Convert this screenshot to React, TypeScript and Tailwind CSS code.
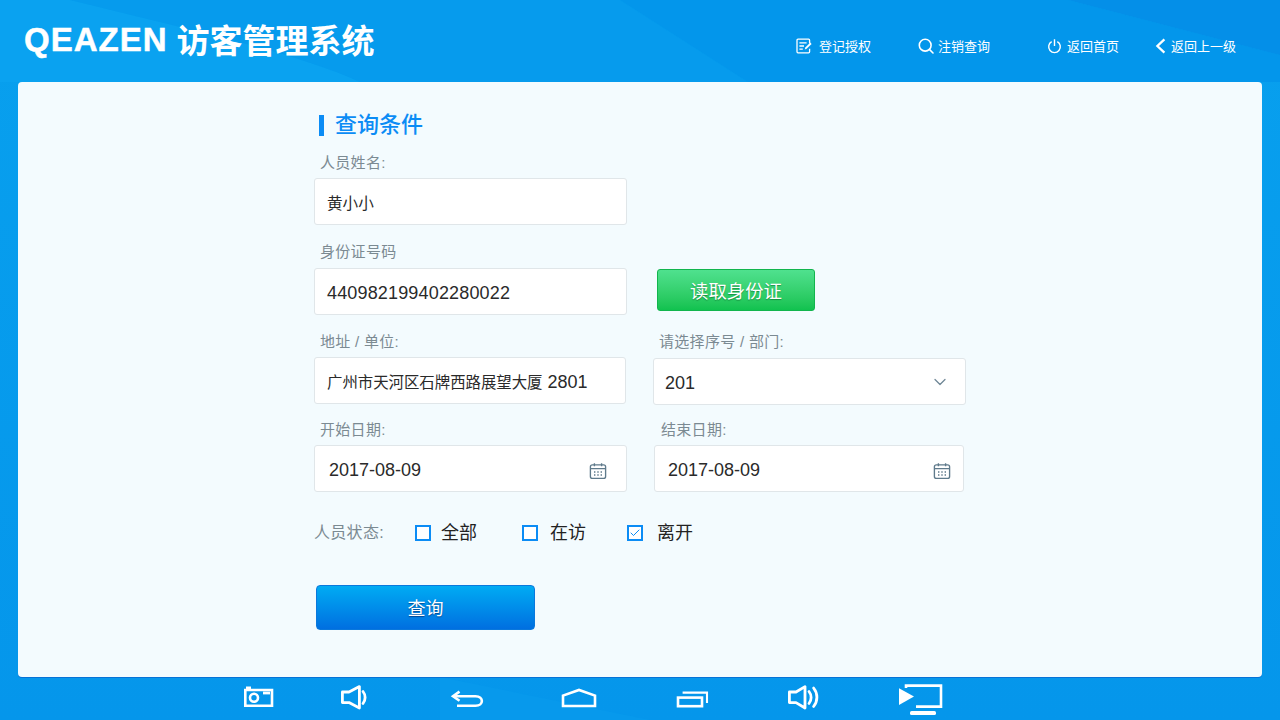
import React from 'react';
import { ChevronDown, Check } from 'lucide-react';

const CalendarIcon = () => (
    <svg viewBox="0 0 18 18" className="w-[18px] h-[18px] text-[#5f7a8b]" fill="none" stroke="currentColor" strokeWidth="1.35">
        <rect x="1.4" y="2.8" width="15.2" height="13.6" rx="2" />
        <path d="M1.4 6.6h15.2M5.4 1.2v3M12.6 1.2v3" />
        <path d="M5 10h1.4M8.3 10h1.4M11.6 10h1.4M5 13h1.4M8.3 13h1.4M11.6 13h1.4" strokeWidth="1.4" />
    </svg>
);

const RegisterIcon = () => (
    <svg viewBox="0 0 16 16" className="w-[16px] h-[16px]" fill="none" stroke="white" strokeWidth="1.3">
        <path d="M13.6 5.5V2.2a1 1 0 0 0-1-1H2a1 1 0 0 0-1 1v11.6a1 1 0 0 0 1 1h10.6a1 1 0 0 0 1-1v-3" />
        <path d="M3.4 4.8h7.2M3.4 8h4.6M3.4 11.2h3.4" />
        <path d="M8.8 11.4l.5-2 5-4.8 1.3 1.3-5 4.9z" fill="white" stroke="none" />
    </svg>
);

const Label = ({ text, className = '' }: { text: string; className?: string }) => (
    <div className={`h-5 leading-5 text-[15px] tracking-[0.3px] text-[#7b8a92] ${className}`}>{text}</div>
);

const Field = ({ width, className = '', children }: { width: string; className?: string; children: React.ReactNode }) => (
    <div className={`${width} h-[47px] pt-[4px] bg-white border border-[#e0e6e9] rounded-[3px] flex items-center text-[18px] text-[#2a2a2a] ${className}`}>
        {children}
    </div>
);

const StatusOption = ({ text, checked, className }: { text: string; checked?: boolean; className: string }) => (
    <div className={`flex items-center ${className}`}>
        <span className="w-4 h-4 border-2 border-[#0b8cf5] bg-white flex items-center justify-center">
            {checked && <Check className="w-3 h-3 text-[#0b8cf5]" strokeWidth={2} />}
        </span>
        <span className="text-[18px] text-[#222]">{text}</span>
    </div>
);

const App: React.FC = () => {
    return (
        <div className="relative w-[1280px] h-[720px] overflow-hidden bg-gradient-to-b from-[#08a0ee] to-[#0596eb] flex flex-col font-['Liberation_Sans','Noto_Sans_CJK_SC',sans-serif]">
            {/* background swooshes */}
            <svg className="absolute inset-0 w-[1280px] h-[720px]" viewBox="0 0 1280 720">
                <path d="M0 0H70C170 25 290 50 360 82H0Z" fill="#0aa2f0" />
                <path d="M70 0H620L748 82H360C290 50 170 25 70 0Z" fill="#069bed" />
                <path d="M620 0H1068L1280 55V82H748Z" fill="#0396eb" />
                <path d="M1068 0H1280V55Z" fill="#048fe8" />
                <path d="M440 677L650 720H440Z" fill="#0799ec" />
            </svg>

            <header className="relative h-[82px] shrink-0 flex items-start pl-6 pr-11">
                <div className="mt-[16px] flex items-center h-[48px] text-white font-bold text-[33px] font-['Liberation_Sans','Noto_Sans_CJK_SC',sans-serif]">
                    <span className="tracking-[1px] [-webkit-text-stroke:0.5px_white]">QEAZEN</span>
                    <span className="ml-[9px] font-['Noto_Sans_CJK_SC',sans-serif]">访客管理系统</span>
                </div>
                <nav className="ml-auto mt-[36px] h-5 flex items-center text-white text-[13px] font-['Noto_Sans_CJK_SC',sans-serif]">
                    <div className="flex items-center gap-[7px]">
                        <RegisterIcon />
                        <span>登记授权</span>
                    </div>
                    <div className="flex items-center gap-[4px] ml-[47px]">
                        <svg viewBox="0 0 16 16" className="w-4 h-4" fill="none" stroke="white" strokeWidth="1.6">
                            <circle cx="7.2" cy="7.2" r="5.9" />
                            <path d="M11.4 11.4L15 15" strokeLinecap="round" />
                        </svg>
                        <span>注销查询</span>
                    </div>
                    <div className="flex items-center gap-[5px] ml-[57px]">
                        <svg viewBox="0 0 16 16" className="w-[15px] h-4" fill="none" stroke="white" strokeWidth="1.5">
                            <path d="M5 3.4A6.2 6.2 0 1 0 11 3.4" />
                            <path d="M8 .8V8" />
                        </svg>
                        <span>返回首页</span>
                    </div>
                    <div className="flex items-center gap-[5px] ml-[36px]">
                        <svg viewBox="0 0 11 16" className="w-[11px] h-4" fill="none" stroke="white" strokeWidth="2.3">
                            <path d="M9.4 1.4L2.4 8L9.4 14.6" />
                        </svg>
                        <span>返回上一级</span>
                    </div>
                </nav>
            </header>

            <main className="relative mx-[18px] h-[595px] shrink-0 bg-[#f3fbfe] rounded-[4px] shadow-[0_1px_0_#0672d6] pl-[296px] pt-[31px]">
                <div className="flex items-center h-[24px] pl-[5px]">
                    <span className="w-[5px] h-[21px] bg-[#0b8cf5]" />
                    <span className="ml-[11px] -mt-[5px] text-[22px] font-medium text-[#0b8cf5] font-['Noto_Sans_CJK_SC',sans-serif]">查询条件</span>
                </div>

                <Label text="人员姓名:" className="pl-[6px] mt-[16px] mb-[5px]" />
                <Field width="w-[313px]" className="pl-[12px]">
                    <span className="text-[15.6px]">黄小小</span>
                </Field>

                <Label text="身份证号码" className="pl-[6px] mt-[17px] mb-[6px]" />
                <div className="flex items-center">
                    <Field width="w-[313px]" className="pl-[12px] tracking-[0.16px]">440982199402280022</Field>
                    <button className="ml-[30px] mb-[4px] w-[158px] h-[42px] pt-[2px] rounded-[3px] border border-[#12b54d] bg-gradient-to-b from-[#4fe18e] to-[#10c24f] text-white text-[18.4px] font-['Noto_Sans_CJK_SC',sans-serif] [text-shadow:0_1px_1px_rgba(0,80,30,0.5)]">
                        读取身份证
                    </button>
                </div>

                <div className="flex mt-[17px]">
                    <div>
                        <Label text="地址 / 单位:" className="pl-[6px] mb-[5px]" />
                        <Field width="w-[312px]" className="pl-[12px]">
                            <span className="text-[15.4px]">广州市天河区石牌西路展望大厦</span>
                            <span className="ml-[5px]">2801</span>
                        </Field>
                    </div>
                    <div className="ml-[27px]">
                        <Label text="请选择序号 / 部门:" className="pl-[6px] mb-[6px]" />
                        <Field width="w-[313px]" className="pl-[11px] pr-[15px] justify-between">
                            <span>201</span>
                            <ChevronDown className="w-5 h-5 -mt-[4px] text-[#6f8796]" strokeWidth={1.5} />
                        </Field>
                    </div>
                </div>

                <div className="flex mt-[15px]">
                    <div>
                        <Label text="开始日期:" className="pl-[6px] mb-[5px]" />
                        <Field width="w-[313px]" className="pl-[14px] pr-[19px] justify-between">
                            <span>2017-08-09</span>
                            <CalendarIcon />
                        </Field>
                    </div>
                    <div className="ml-[27px]">
                        <Label text="结束日期:" className="pl-[7px] mb-[5px]" />
                        <Field width="w-[310px]" className="pl-[13px] pr-[12px] justify-between">
                            <span>2017-08-09</span>
                            <CalendarIcon />
                        </Field>
                    </div>
                </div>

                <div className="flex items-center h-5 mt-[31px]">
                    <Label text="人员状态:" className="w-[101px] !text-[16px]" />
                    <StatusOption text="全部" className="w-[107px] gap-[10px]" />
                    <StatusOption text="在访" className="w-[105px] gap-[12px]" />
                    <StatusOption text="离开" checked className="gap-[14px]" />
                </div>

                <button className="block ml-[2px] mt-[42px] w-[219px] h-[45px] rounded-[4px] border border-[#0a78dc] bg-gradient-to-b from-[#02abf3] to-[#006fe0] text-white text-[18px] font-['Noto_Sans_CJK_SC',sans-serif] [text-shadow:0_1px_1px_rgba(0,30,90,0.6)]">
                    查询
                </button>
            </main>

            <footer className="relative flex-1 flex items-start pt-[3px] pl-[238px] text-white">
                <svg viewBox="0 0 40 36" className="w-10 h-9" fill="none" stroke="currentColor" strokeWidth="2.6">
                    <path d="M7.3 10H34V25.8H7.3Z" />
                    <path d="M8 7.8H13" />
                    <circle cx="16" cy="17.8" r="4" />
                    <path d="M25 13H32" strokeWidth="2.8" />
                </svg>
                <svg viewBox="0 0 40 36" className="w-10 h-9 ml-[56px]" fill="none" stroke="currentColor" strokeWidth="2.8" strokeLinejoin="round">
                    <path d="M8.4 12H15L25.4 6.6V28L15 22.6H8.4Z" />
                    <path d="M29 11.5C31.8 15 31.8 20 29 23.5" strokeLinecap="round" />
                </svg>
                <svg viewBox="0 0 40 36" className="w-10 h-9 ml-[72px]" fill="none" stroke="currentColor" strokeWidth="2.6">
                    <path d="M13.5 11.6L7 16.2L13.5 20.8" />
                    <path d="M7 16.2H29.5C38 16.2 38 25.8 29.5 25.8H11" />
                </svg>
                <svg viewBox="0 0 40 36" className="w-10 h-9 ml-[73px]" fill="none" stroke="currentColor" strokeWidth="2.6">
                    <path d="M4 26V15.6L20 10L36 15.6V26Z" />
                </svg>
                <svg viewBox="0 0 40 36" className="w-10 h-9 ml-[73px]" fill="none" stroke="currentColor" strokeWidth="2.6">
                    <rect x="6" y="17.6" width="24" height="8.6" />
                    <path d="M10.6 12.6H35V23.1" strokeWidth="2.1" />
                </svg>
                <svg viewBox="0 0 40 36" className="w-10 h-9 ml-[72px]" fill="none" stroke="currentColor" strokeWidth="2.8" strokeLinejoin="round">
                    <path d="M5.4 12H12L21 6.6V28L12 22.6H5.4Z" />
                    <path d="M25 11.5C27.8 15 27.8 20 25 23.5M29.6 8C34 13.5 34 21 29.6 26.5" strokeLinecap="round" />
                </svg>
                <svg viewBox="0 0 44 36" className="w-11 h-9 ml-[75px]" fill="none" stroke="currentColor" strokeWidth="2.6">
                    <path d="M7 8V5.6H42V26.6H17" />
                    <path d="M0 8.2L15 16.6L0 25Z" fill="currentColor" stroke="none" />
                    <rect x="11" y="31" width="26" height="4" rx="1.6" fill="currentColor" stroke="none" />
                </svg>
            </footer>
        </div>
    );
};

export default App;
